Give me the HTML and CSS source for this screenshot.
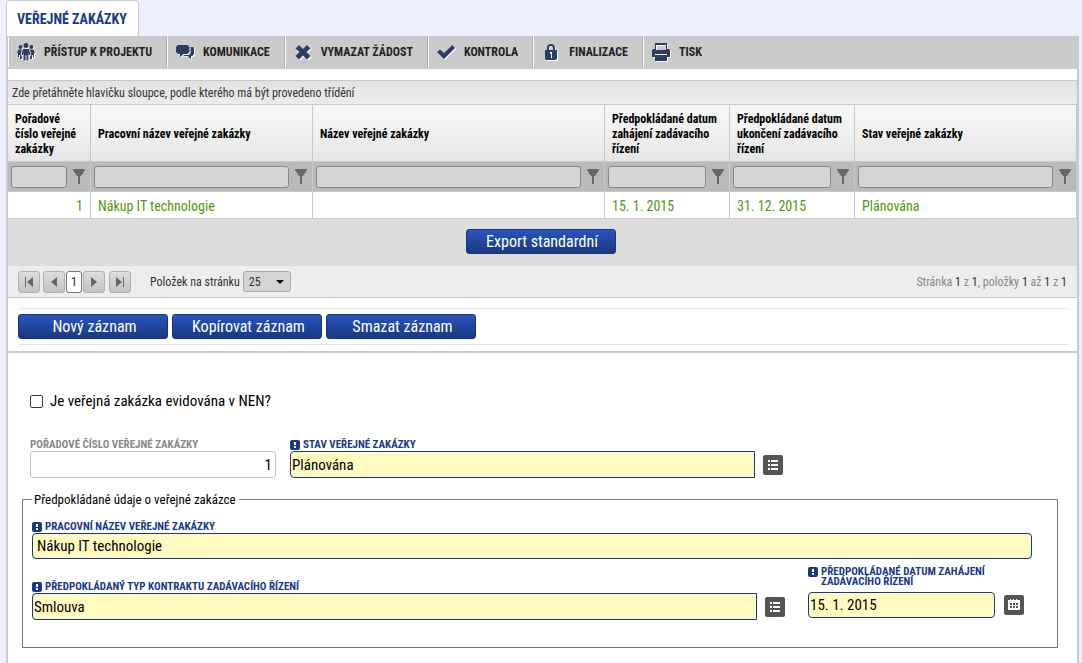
FILE: index.html
```html
<!DOCTYPE html>
<html lang="cs">
<head>
<meta charset="utf-8">
<title>Veřejné zakázky</title>
<link rel="stylesheet" href="styles.css">
</head>
<body>
<svg class="sprite" aria-hidden="true">
  <symbol id="funnel" viewBox="0 0 12 16"><path d="M0 0h12v1L8 7H7v8H5V7H4L0 1z"/></symbol>
  <symbol id="list" viewBox="0 0 20 20"><path d="M5 5h2v2H5zM8 5h7v2H8zM5 9h2v2H5zM8 9h7v2H8zM5 13h2v2H5zM8 13h7v2H8z"/></symbol>
  <symbol id="calendar" viewBox="0 0 20 20"><path fill-rule="evenodd" d="M4 5h2V4h1v1h2V4h1v1h2V4h1v1h3v10H4zM6 8v2h2V8zM9 8v2h2V8zM12 8v2h2V8zM6 11v2h2v-2zM9 11v2h2v-2zM12 11v2h2v-2z"/></symbol>
  <symbol id="req" viewBox="0 0 10 10"><rect width="10" height="10" rx="2" fill="#17398a"/><path fill="#fff" d="M4 2h2v3H4zM4 6h2v2H4z"/></symbol>
</svg>
<main class="page">
  <h1 class="tab">VEŘEJNÉ ZAKÁZKY</h1>
  <div class="panel">
    <nav class="toolbar">
      <button class="tool"><svg class="tool-icon" viewBox="0 0 18 18"><circle cx="9" cy="2.6" r="2.5"/><circle cx="3.6" cy="4" r="2"/><circle cx="14.4" cy="4" r="2"/><path d="M6 6h6l1.600 6h-1.600l-.6-2v7.500H9.500V12.500h-1v5H6.600V10L6 12H4.400zM1.500 6.500H5L3.600 12l1.200 1v3H3v-4H2v2H1v-4H0zM16.500 6.500H13l1.400 5.500-1.200 1v3H15v-4h1v2h1v-4h1z"/></svg>PŘÍSTUP K PROJEKTU</button>
      <button class="tool"><svg class="tool-icon" viewBox="0 0 18 18"><path d="M2 2h9.500l2 2v5l-2 2H7.500l-3.500 3v-3H2L0 9V4zM14.600 4H17l1 1.500V11l-1.500 2H15v3l-3.500-3H7l1.500-1H13l1.600-2z"/></svg>KOMUNIKACE</button>
      <button class="tool"><svg class="tool-icon" viewBox="0 0 18 18"><path d="M5 2l4 4 4-4 3.500 3.500L12.500 9l4 4-3.500 3.500-4-4-4 4L1.500 13l4-4-4-3.500z"/></svg>VYMAZAT ŽÁDOST</button>
      <button class="tool"><svg class="tool-icon" viewBox="0 0 18 18"><path d="M3 6.500l4 3.500 8.500-8L18 5 7 16 0 9z"/></svg>KONTROLA</button>
      <button class="tool"><svg class="tool-icon" viewBox="0 0 18 18"><path fill-rule="evenodd" d="M5 7V5a4 4 0 0 1 8 0v2h2v8.500L14 17H4l-1-1.500V7zM7 7h4V5a2 2 0 0 0-4 0zM8 9v2h1v4h1V9z"/></svg>FINALIZACE</button>
      <button class="tool"><svg class="tool-icon" viewBox="0 0 18 18"><path fill-rule="evenodd" d="M3 0h12v6h2l1 1v7h-3v4H3v-4H0V7l1-1h2zM4 2v5h10V2zM3 11v1h12v-1z"/></svg>TISK</button>
    </nav>

    <p class="group-hint">Zde přetáhněte hlavičku sloupce, podle kterého má být provedeno třídění</p>
    <table class="grid">
      <colgroup><col class="c-no"><col class="c-work"><col class="c-name"><col class="c-date"><col class="c-date"><col></colgroup>
      <thead>
        <tr class="heads"><th>Pořadové číslo veřejné zakázky</th><th>Pracovní název veřejné zakázky</th><th>Název veřejné zakázky</th><th>Předpokládané datum zahájení zadávacího řízení</th><th>Předpokládané datum ukončení zadávacího řízení</th><th>Stav veřejné zakázky</th></tr>
        <tr class="filters">
          <td><div class="filter"><input aria-label="Filtr pořadové číslo"><button aria-label="Filtrovat"><svg><use href="#funnel"/></svg></button></div></td>
          <td><div class="filter"><input aria-label="Filtr pracovní název"><button aria-label="Filtrovat"><svg><use href="#funnel"/></svg></button></div></td>
          <td><div class="filter"><input aria-label="Filtr název"><button aria-label="Filtrovat"><svg><use href="#funnel"/></svg></button></div></td>
          <td><div class="filter"><input aria-label="Filtr datum zahájení"><button aria-label="Filtrovat"><svg><use href="#funnel"/></svg></button></div></td>
          <td><div class="filter"><input aria-label="Filtr datum ukončení"><button aria-label="Filtrovat"><svg><use href="#funnel"/></svg></button></div></td>
          <td><div class="filter"><input aria-label="Filtr stav"><button aria-label="Filtrovat"><svg><use href="#funnel"/></svg></button></div></td>
        </tr>
      </thead>
      <tbody>
        <tr class="record"><td class="num">1</td><td>Nákup IT technologie</td><td></td><td>15. 1. 2015</td><td>31. 12. 2015</td><td>Plánována</td></tr>
      </tbody>
    </table>
    <div class="export"><button class="primary">Export standardní</button></div>
    <div class="pager">
      <div class="pages">
        <button class="page-btn" aria-label="První"><svg viewBox="0 0 10 10"><path d="M1 0h1v10H1zM9 0v10L3 5z"/></svg></button>
        <button class="page-btn" aria-label="Předchozí"><svg viewBox="0 0 10 10"><path d="M8 0v10L2 5z"/></svg></button>
        <button class="page-btn current">1</button>
        <button class="page-btn" aria-label="Další"><svg viewBox="0 0 10 10"><path d="M2 0v10l6-5z"/></svg></button>
        <button class="page-btn last" aria-label="Poslední"><svg viewBox="0 0 10 10"><path d="M8 0h1v10H8zM1 0v10l6-5z"/></svg></button>
      </div>
      <label class="size-label" for="size">Položek na stránku</label>
      <span class="size"><select id="size"><option>25</option></select><svg class="caret" viewBox="0 0 8 4"><path d="M0 0h8L4 4z"/></svg></span>
      <p class="summary">Stránka <b>1</b> z <b>1</b>, položky <b>1</b> až <b>1</b> z <b>1</b></p>
    </div>

    <div class="actions">
      <button class="primary">Nový záznam</button>
      <button class="primary">Kopírovat záznam</button>
      <button class="primary">Smazat záznam</button>
    </div>

    <form class="detail">
      <div class="check"><input type="checkbox" id="nen"><label for="nen">Je veřejná zakázka evidována v NEN?</label></div>
      <div class="top-row">
        <div class="field order">
          <label class="caption muted" for="no">POŘADOVÉ ČÍSLO VEŘEJNÉ ZAKÁZKY</label>
          <input class="box plain" id="no" value="1">
        </div>
        <div class="field state">
          <label class="caption" for="state"><svg class="req"><use href="#req"/></svg>STAV VEŘEJNÉ ZAKÁZKY</label>
          <div class="picker"><input class="box" id="state" value="Plánována"><button type="button" class="pick" aria-label="Vybrat stav"><svg><use href="#list"/></svg></button></div>
        </div>
      </div>
      <fieldset class="planned">
        <legend>Předpokládané údaje o veřejné zakázce</legend>
        <div class="field">
          <label class="caption" for="work"><svg class="req"><use href="#req"/></svg>PRACOVNÍ NÁZEV VEŘEJNÉ ZAKÁZKY</label>
          <input class="box indent" id="work" value="Nákup IT technologie">
        </div>
        <div class="bottom-row">
          <div class="field">
            <label class="caption" for="type"><svg class="req"><use href="#req"/></svg>PŘEDPOKLÁDANÝ TYP KONTRAKTU ZADÁVACÍHO ŘÍZENÍ</label>
            <div class="picker"><input class="box" id="type" value="Smlouva"><button type="button" class="pick" aria-label="Vybrat typ"><svg><use href="#list"/></svg></button></div>
          </div>
          <div class="field date">
            <label class="caption two-line" for="start"><svg class="req"><use href="#req"/></svg><span>PŘEDPOKLÁDANÉ DATUM ZAHÁJENÍ ZADÁVACÍHO ŘÍZENÍ</span></label>
            <div class="picker"><input class="box round" id="start" value="15. 1. 2015"><button type="button" class="pick" aria-label="Kalendář"><svg><use href="#calendar"/></svg></button></div>
          </div>
        </div>
      </fieldset>
    </form>
  </div>
</main>
</body>
</html>
```
FILE: styles.css
```css
* { box-sizing: border-box; }
body, button, input, select {
  font-family: "Roboto Condensed", "Liberation Sans Narrow", Roboto, sans-serif;
}
body { margin: 0; background: #ecf0fd; color: #000; font-size: 12px; }
button { margin: 0; padding: 0; border: 0; background: none; color: inherit; cursor: pointer; }
p, h1 { margin: 0; }
.sprite { display: none; }
.page { display: flex; flex-direction: column; min-height: 100vh; padding: 0 3px 0 6px; }

.tab {
  align-self: flex-start;
  height: 36px;
  padding: 0 11px 0 10px;
  border: solid #cacaca;
  border-width: 1px 1px 0;
  border-radius: 4px 4px 0 0;
  background: #fff;
  color: #17398a;
  font-size: 14px;
  font-weight: 700;
  line-height: 36px;
}
.panel { flex: 1; border: solid #cacaca; border-width: 0 2px; background: #fff; }

.toolbar { display: flex; height: 33px; margin-bottom: 11px; padding: 1px 0 2px; background: #cacaca; }
.tool {
  display: flex;
  align-items: center;
  gap: 9px;
  padding: 0 14px 0 8px;
  border-left: 1px solid #fff;
  border-right: 1px solid #aaa;
  color: #222;
  font-size: 12px;
  font-weight: 700;
  white-space: nowrap;
}
.tool:last-child { border-right: 0; }
.tool-icon { width: 18px; height: 18px; fill: #2c3e60; filter: drop-shadow(1px 1px 0 #fff); }

.group-hint {
  height: 24px;
  padding-left: 4px;
  border-top: 1px solid #c8c8c8;
  background: linear-gradient(#e2e2e2, #ececec);
  color: #333;
  line-height: 24px;
}
.grid { width: 100%; border-collapse: separate; border-spacing: 0; table-layout: fixed; }
.c-no { width: 83px; }
.c-work { width: 222px; }
.c-name { width: 292px; }
.c-date { width: 125px; }
.grid th, .grid td { border-top: 1px solid #c8c8c8; border-right: 1px solid #c8c8c8; }
.heads th {
  height: 57px;
  padding: 2px 7px 0;
  background: linear-gradient(#f8f8f8, #e6e6e6);
  font-weight: 700;
  line-height: 15px;
  text-align: left;
}
.filters td { height: 30px; padding: 0 5px 0 3px; background: #b9b9b9; }
.filter { display: flex; align-items: center; gap: 6px; }
.filter input {
  flex: 1;
  min-width: 0;
  height: 22px;
  border: 1px solid #888;
  border-radius: 3px;
  background: #d5d5d5;
}
.filter button, .filter svg { display: block; width: 12px; height: 16px; fill: #666; }
.record td { height: 28px; padding: 1px 7px 0; border-bottom: 1px solid #c8c8c8; color: #4b9a0c; font-size: 14px; }
.record .num { text-align: right; }

.primary {
  width: 150px;
  height: 25px;
  padding: 1px 0 0 3px;
  border: 1px solid #17347c;
  border-radius: 3px;
  background: linear-gradient(#2855be, #19397f);
  color: #fff;
  font-size: 16px;
  line-height: 22px;
}
.export { display: flex; justify-content: center; align-items: center; height: 47px; padding: 0 4px 2px 0; background: #ddd; }
.pager {
  display: flex;
  align-items: center;
  height: 32px;
  padding: 0 10px;
  border-bottom: 1px solid #c8c8c8;
  background: #ededed;
  color: #333;
}
.pages { display: flex; gap: 1px; }
.page-btn {
  display: grid;
  place-items: center;
  width: 22px;
  height: 22px;
  border: 1px solid #b0b0b0;
  border-radius: 3px;
  background: linear-gradient(#dedede, #c2c2c2);
}
.page-btn:first-child { margin-right: 2px; }
.page-btn svg { width: 10px; height: 10px; fill: #666; }
.page-btn.current { width: 16px; border-color: #777; background: #fff; font-size: 13px; }
.page-btn.last { margin-left: 3px; }
.size-label { margin: 0 3px 0 19px; font-size: 12px; }
.size { display: grid; align-items: center; }
.size select {
  grid-area: 1 / 1;
  width: 48px;
  height: 21px;
  padding: 0 5px;
  border: 1px solid #aaa;
  border-radius: 3px;
  background: #d5d5d5;
  color: #333;
  font-size: 12px;
  appearance: none;
}
.caret { grid-area: 1 / 1; justify-self: end; width: 8px; height: 4px; margin-right: 7px; pointer-events: none; }
.summary { margin-left: auto; color: #888; }
.summary b { color: #333; font-weight: 400; }

.actions {
  display: flex;
  gap: 4px;
  margin: 10px 9px 6px 10px;
  padding: 5px 0;
  border: solid #e2e2e2;
  border-width: 1px 0;
}
.detail { padding: 40px 19px 20px 14px; border-top: 2px solid #cacaca; }
.check { display: flex; align-items: center; gap: 7px; height: 16px; margin-left: 8px; font-size: 15px; }
.check input {
  width: 13px;
  height: 13px;
  margin: 0;
  border: 1px solid #2b3f44;
  border-radius: 2px;
  background: #fff;
  appearance: none;
}
.check input:checked { background: #17398a; }
.top-row { display: flex; gap: 14px; margin: 29px 0 12px 8px; }
.order { flex: 0 1 246px; }
.state { flex: 0 1 493px; }
.field { min-width: 0; }
.caption {
  display: flex;
  align-items: center;
  gap: 3px;
  height: 13px;
  color: #17398a;
  font-size: 11px;
  font-weight: 700;
  white-space: nowrap;
}
.caption.muted { color: #888; }
.req { flex: none; width: 10px; height: 10px; }
.picker { display: flex; align-items: center; gap: 8px; }
.box {
  flex: 1;
  display: block;
  width: 100%;
  min-width: 0;
  height: 27px;
  padding: 0 1px;
  border: 1px solid #17398a;
  border-radius: 4px 0 0 4px;
  background: #fffac0;
  color: #000;
  font-size: 15px;
}
.box.plain { padding-right: 3px; border-color: #c4c4c4; border-radius: 3px; background: #fff; text-align: right; }
.box.indent { height: 26px; padding-left: 4px; border-radius: 4px; }
.box.round { height: 26px; border-radius: 4px; }
.pick { flex: none; width: 20px; height: 20px; border-radius: 2px; background: #555; }
.pick svg { display: block; width: 20px; height: 20px; fill: #fff; }
.planned { min-width: 0; margin: 0; padding: 12px 25px 27px 9px; border: 1px solid #777; }
.planned legend { height: 18px; padding: 1px 3px 0 2px; font-size: 13px; line-height: 18px; }
.bottom-row { display: grid; grid-template-columns: minmax(0, 1fr) 224px; gap: 23px; align-items: end; }
.date { padding: 8px 8px 2px 0; }
.date .picker { gap: 9px; }
.caption.two-line { align-items: flex-start; height: 25px; line-height: 10px; white-space: normal; }
```
